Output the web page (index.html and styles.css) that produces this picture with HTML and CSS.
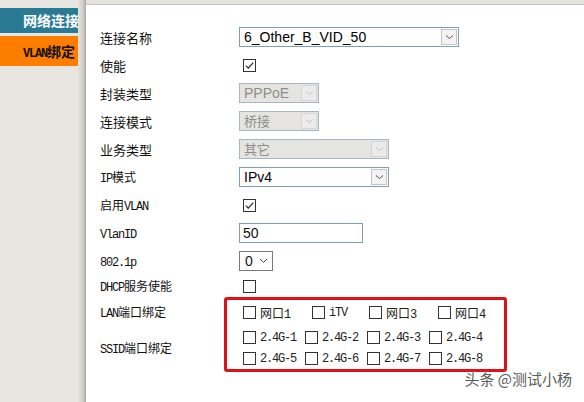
FILE: index.html
```html
<!DOCTYPE html>
<html lang="zh-CN">
<head>
    <meta charset="UTF-8">
    <meta name="viewport" content="width=device-width, initial-scale=1.0">
    <link rel="stylesheet" href="styles.css">
</head>
<body>
    <div class="page">
        <aside class="sidebar">
            <div class="tab tab-net">网络连接</div>
            <div class="tab tab-vlan"><span class="en">VLAN</span>绑定</div>
        </aside>
        <div class="divider"></div>

        <main class="content">
            <div class="topbar"></div>

            <div class="form">
                <div class="row">
                    <span class="lbl">连接名称</span>
                    <div class="select w-name">
                        <span class="val">6_Other_B_VID_50</span>
                        <span class="arrow"><svg width="9" height="6" viewBox="0 0 9 6"><path d="M1 1.5 L4.5 4.5 L8 1.5" fill="none" stroke="#555" stroke-width="1"/></svg></span>
                    </div>
                </div>
                <div class="row">
                    <span class="lbl">使能</span>
                    <span class="check"><svg width="13" height="13" viewBox="0 0 13 13"><rect x="0.5" y="0.5" width="12" height="12" fill="#fff" stroke="#333"/><path d="M2.8 6.6 L5.3 9.2 L10.2 3.6" fill="none" stroke="#222" stroke-width="1.1"/></svg></span>
                </div>
                <div class="row">
                    <span class="lbl">封装类型</span>
                    <div class="select disabled w-small">
                        <span class="val">PPPoE</span>
                        <span class="arrow"><svg width="9" height="6" viewBox="0 0 9 6"><path d="M1 1.5 L4.5 4.5 L8 1.5" fill="none" stroke="#c4c4c4" stroke-width="1"/></svg></span>
                    </div>
                </div>
                <div class="row">
                    <span class="lbl">连接模式</span>
                    <div class="select disabled w-small">
                        <span class="val cn">桥接</span>
                        <span class="arrow"><svg width="9" height="6" viewBox="0 0 9 6"><path d="M1 1.5 L4.5 4.5 L8 1.5" fill="none" stroke="#c4c4c4" stroke-width="1"/></svg></span>
                    </div>
                </div>
                <div class="row">
                    <span class="lbl">业务类型</span>
                    <div class="select disabled w-wide">
                        <span class="val cn">其它</span>
                        <span class="arrow"><svg width="9" height="6" viewBox="0 0 9 6"><path d="M1 1.5 L4.5 4.5 L8 1.5" fill="none" stroke="#c4c4c4" stroke-width="1"/></svg></span>
                    </div>
                </div>
                <div class="row">
                    <span class="lbl song"><span class="en">IP</span>模式</span>
                    <div class="select w-wide">
                        <span class="val">IPv4</span>
                        <span class="arrow"><svg width="9" height="6" viewBox="0 0 9 6"><path d="M1 1.5 L4.5 4.5 L8 1.5" fill="none" stroke="#555" stroke-width="1"/></svg></span>
                    </div>
                </div>
                <div class="row">
                    <span class="lbl song">启用<span class="en">VLAN</span></span>
                    <span class="check"><svg width="13" height="13" viewBox="0 0 13 13"><rect x="0.5" y="0.5" width="12" height="12" fill="#fff" stroke="#333"/><path d="M2.8 6.6 L5.3 9.2 L10.2 3.6" fill="none" stroke="#222" stroke-width="1.1"/></svg></span>
                </div>
                <div class="row">
                    <span class="lbl song"><span class="en">VlanID</span></span>
                    <div class="input w-vlan">50</div>
                </div>
                <div class="row">
                    <span class="lbl song"><span class="en">802.1p</span></span>
                    <div class="select-plain">
                        <span class="val">0</span>
                        <svg width="9" height="6" viewBox="0 0 9 6"><path d="M1 1 L4.5 4.5 L8 1" fill="none" stroke="#444" stroke-width="1"/></svg>
                    </div>
                </div>
                <div class="row row-short">
                    <span class="lbl song"><span class="en">DHCP</span>服务使能</span>
                    <span class="check"><svg width="13" height="13" viewBox="0 0 13 13"><rect x="0.5" y="0.5" width="12" height="12" fill="#fff" stroke="#333"/></svg></span>
                </div>

                <div class="bind">
                    <div class="bind-labels">
                        <span class="lbl song"><span class="en">LAN</span>端口绑定</span>
                        <span class="lbl song"><span class="en">SSID</span>端口绑定</span>
                    </div>
                    <div class="mark">
                        <div class="ports">
                            <span class="opt"><i class="box"></i><span>网口<span class="en">1</span></span></span>
                            <span class="opt"><i class="box"></i><span class="en">iTV</span></span>
                            <span class="opt"><i class="box"></i><span>网口<span class="en">3</span></span></span>
                            <span class="opt"><i class="box"></i><span>网口<span class="en">4</span></span></span>
                        </div>
                        <div class="ssids">
                            <span class="opt"><i class="box"></i><span class="en">2.4G-1</span></span>
                            <span class="opt"><i class="box"></i><span class="en">2.4G-2</span></span>
                            <span class="opt"><i class="box"></i><span class="en">2.4G-3</span></span>
                            <span class="opt"><i class="box"></i><span class="en">2.4G-4</span></span>
                            <span class="opt"><i class="box"></i><span class="en">2.4G-5</span></span>
                            <span class="opt"><i class="box"></i><span class="en">2.4G-6</span></span>
                            <span class="opt"><i class="box"></i><span class="en">2.4G-7</span></span>
                            <span class="opt"><i class="box"></i><span class="en">2.4G-8</span></span>
                        </div>
                    </div>
                </div>
            </div>
        </main>

        <div class="watermark">头条 @测试小杨</div>
    </div>
</body>
</html>
```

FILE: styles.css
```css
body {
    margin: 0;
    font-family: "Noto Sans CJK SC", sans-serif;
    color: #111;
    background: #fff;
}

.page {
    position: relative;
    display: flex;
    height: 402px;
    overflow: hidden;
}

/* Left menu */
.sidebar {
    width: 78px;
    background: #e8e6e1;
    padding-top: 8px;
    display: flex;
    flex-direction: column;
    gap: 3px;
}
.tab {
    padding-left: 23px;
    white-space: nowrap;
    overflow: hidden;
    font-size: 14px;
    font-weight: bold;
}
.tab-net {
    height: 25px;
    line-height: 25px;
    background: #2b7a93;
    color: #fff;
}
.tab-vlan {
    height: 30px;
    line-height: 30px;
    background: #fd7d00;
    color: #111;
}
.tab-vlan .en {
    font-size: 12px;
}

.divider {
    width: 8px;
    background: linear-gradient(to right, #e4e2dd, #d2d0cb 60%, #aaa8a3);
}

/* Content */
.content {
    flex: 1;
}
.topbar {
    height: 4px;
    background: #e4e2dd;
    border-bottom: 1px solid #c8c6c1;
}
.form {
    padding: 18px 0 0 14px;
}
.row {
    display: grid;
    grid-template-columns: 139px 1fr;
    align-items: center;
    height: 28px;
}
.row-short {
    height: 22px;
}

.lbl {
    font-size: 13px;
    color: #111;
}
.lbl.song {
    font-size: 12px;
}
.en {
    font-family: "Liberation Mono", monospace;
    letter-spacing: -1.2px;
}

/* Select boxes */
.select {
    display: flex;
    box-sizing: border-box;
    height: 20px;
    border: 1px solid #7f9db9;
    background: #fff;
}
.select .val {
    flex: 1;
    padding-left: 4px;
    font-family: "Liberation Sans", sans-serif;
    font-size: 14px;
    line-height: 18px;
    color: #000;
}
.select .val.cn {
    font-family: "Noto Sans CJK SC", sans-serif;
    font-size: 13px;
}
.select .arrow {
    width: 14px;
    margin: 1px;
    border: 1px solid #c4c4c4;
    background: #f3f3f3;
    display: flex;
    align-items: center;
    justify-content: center;
}
.select.disabled {
    border-color: #a7b6c4;
    background: #e6e4e0;
}
.select.disabled .val {
    color: #8d8d8d;
}
.select.disabled .arrow {
    border-color: #d6d6d6;
    background: #ebebeb;
}
.w-name { width: 220px; }
.w-small { width: 80px; }
.w-wide { width: 150px; }
.w-vlan { width: 124px; }

.input {
    box-sizing: border-box;
    height: 20px;
    border: 1px solid #7f9db9;
    padding-left: 3px;
    font-family: "Liberation Sans", sans-serif;
    font-size: 14px;
    line-height: 18px;
}

.select-plain {
    box-sizing: border-box;
    width: 34px;
    height: 20px;
    border: 1px solid #7a7a7a;
    display: flex;
    align-items: center;
    gap: 6px;
    padding-left: 5px;
    font-family: "Liberation Sans", sans-serif;
    font-size: 14px;
}

.check {
    display: flex;
    padding-left: 4px;
}

/* Port binding */
.bind {
    display: flex;
}
.bind-labels {
    width: 124px;
    display: grid;
    grid-template-rows: 30px 41px;
    align-items: center;
}
.mark {
    width: 283px;
    box-sizing: border-box;
    height: 75px;
    border: 3px solid #e01018;
    border-radius: 3px;
    padding: 2px 0 0 16px;
}
.ports {
    display: flex;
    gap: 22px;
    height: 21px;
    align-items: center;
    margin-bottom: 4px;
}
.ssids {
    display: grid;
    grid-template-columns: repeat(4, 62px);
    grid-auto-rows: 21px;
    align-items: center;
}
.opt {
    display: flex;
    align-items: center;
    gap: 4px;
    font-size: 12px;
    white-space: nowrap;
    color: #222;
}
.box {
    width: 11px;
    height: 11px;
    border: 1px solid #333;
    background: #fff;
}

.watermark {
    position: absolute;
    right: 12px;
    bottom: 13px;
    font-size: 15px;
    color: #5a5a5a;
    text-shadow: 0 0 2px #fff;
}
```
